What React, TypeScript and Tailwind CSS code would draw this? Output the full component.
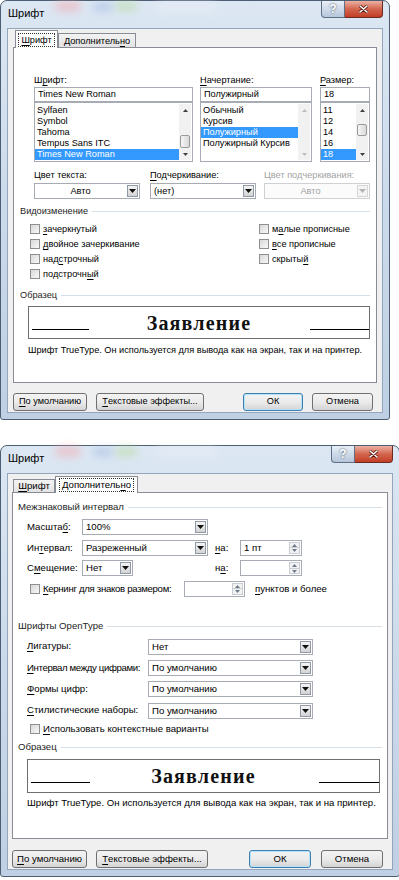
import React from "react";

const U = ({ children }: { children: React.ReactNode }) => (
  <span className="underline decoration-1 underline-offset-[1.5px]">{children}</span>
);

function TitleBar() {
  return (
    <div className="relative flex h-[27px] items-start">
      <span className="pointer-events-none absolute left-[48px] top-[1px] h-[9px] w-[26px] rounded-full bg-[#f3a7ad] opacity-60 blur-[4px]" />
      <span className="pointer-events-none absolute left-[86px] top-[2px] h-[8px] w-[20px] rounded-full bg-[#9fb7e0] opacity-60 blur-[4px]" />
      <span className="pointer-events-none absolute left-[108px] top-[1px] h-[9px] w-[22px] rounded-full bg-[#b9dca0] opacity-60 blur-[4px]" />
      <span className="pointer-events-none absolute left-[150px] top-[2px] h-[8px] w-[60px] rounded-full bg-[#e9eff7] opacity-70 blur-[4px]" />
      <span className="relative ml-[1px] mt-[6px] text-[11px] leading-[13px] text-black">Шрифт</span>
      <div className="relative ml-auto flex">
        <div className="flex h-[17px] w-[24px] items-center justify-center rounded-bl-[4px] border border-t-0 border-[#5f6f84] bg-gradient-to-b from-[#e8eff7] to-[#b6c6da] text-[12px] font-bold leading-none text-white [text-shadow:0_0_2px_#2b3a4d]">
          ?
        </div>
        <div className="flex h-[17px] w-[38px] items-center justify-center rounded-br-[4px] border border-l-0 border-t-0 border-[#6b2a20] bg-gradient-to-b from-[#eab0a3] via-[#d3654e] to-[#c23d24]">
          <svg width="9" height="8" viewBox="0 0 9 8">
            <path d="M1 1l7 6M8 1L1 7" stroke="#5a1a10" strokeWidth="3" strokeLinecap="round" />
            <path d="M1 1l7 6M8 1L1 7" stroke="#ffffff" strokeWidth="1.6" strokeLinecap="round" />
          </svg>
        </div>
      </div>
    </div>
  );
}

function Frame({ children, className }: { children: React.ReactNode; className: string }) {
  return (
    <div
      className={`relative rounded-t-[7px] rounded-b-[3px] border border-[#4e5e72] bg-gradient-to-b from-[#dce7f3] via-[#cbdaeb] to-[#bfd0e4] px-[6px] pb-[6px] ${className}`}
    >
      <TitleBar />
      <div className="border border-[#94a6bb] bg-[#f0f0f0]">{children}</div>
    </div>
  );
}

function Arrow({ dim }: { dim?: boolean }) {
  return (
    <div
      className={`m-px flex w-[11px] items-center justify-center border ${
        dim ? "border-[#d6d6d6] bg-[#f4f4f4]" : "border-[#8f9aa6] bg-gradient-to-b from-[#f5f5f5] to-[#d3d3d3]"
      }`}
    >
      <svg width="7" height="4" viewBox="0 0 7 4">
        <path d="M0 0h7L3.5 4z" fill={dim ? "#b5b5b5" : "#111111"} />
      </svg>
    </div>
  );
}

function Select({
  value,
  className,
  center,
  dim,
}: {
  value: string;
  className: string;
  center?: boolean;
  dim?: boolean;
}) {
  return (
    <div
      className={`flex h-[16px] border ${dim ? "border-[#cfd1d5] bg-[#fbfbfb]" : "border-[#a7abb3] bg-white"} ${className}`}
    >
      <span
        className={`flex-1 truncate px-[3px] leading-[14px] ${center ? "text-center" : ""} ${
          dim ? "text-[#a3a3a3]" : "text-black"
        }`}
      >
        {value}
      </span>
      <Arrow dim={dim} />
    </div>
  );
}

function Spin({ value, className }: { value?: string; className: string }) {
  return (
    <div className={`flex h-[16px] border border-[#a7abb3] bg-white ${className}`}>
      <span className="flex-1 px-[3px] leading-[14px]">{value}</span>
      <div className="my-px mr-px flex w-[11px] flex-col border border-[#c9ced5] bg-[#f2f2f2]">
        <div className="flex flex-1 items-center justify-center border-b border-[#c9ced5]">
          <svg width="5" height="3" viewBox="0 0 5 3">
            <path d="M2.5 0L5 3H0z" fill="#6d7b8c" />
          </svg>
        </div>
        <div className="flex flex-1 items-center justify-center">
          <svg width="5" height="3" viewBox="0 0 5 3">
            <path d="M0 0h5L2.5 3z" fill="#6d7b8c" />
          </svg>
        </div>
      </div>
    </div>
  );
}

function Box() {
  return (
    <span className="h-[10px] w-[10px] shrink-0 border border-[#8e8f8f] bg-gradient-to-br from-[#d9d9d9] to-[#f8f8f8]" />
  );
}

function Check({ children, className }: { children: React.ReactNode; className?: string }) {
  return (
    <div className={`flex items-center ${className ?? "h-[15px]"}`}>
      <Box />
      <span className="ml-[3px] whitespace-nowrap leading-[12px]">{children}</span>
    </div>
  );
}

function Group({ title, className }: { title: React.ReactNode; className: string }) {
  return (
    <div className={`flex h-[12px] items-center ${className}`}>
      <span className="leading-[12px] text-[#1e1e1e]">{title}</span>
      <span className="ml-[4px] h-px flex-1 bg-[#d5dfe5]" />
    </div>
  );
}

function ScrollBar({ thumb, dim }: { thumb?: string; dim?: boolean }) {
  const c = dim ? "#bdbdbd" : "#3f3f3f";
  return (
    <div className="flex w-[12px] flex-col bg-[#f1f1f1]">
      <div className="flex h-[12px] items-center justify-center">
        <svg width="5" height="3" viewBox="0 0 5 3">
          <path d="M2.5 0L5 3H0z" fill={c} />
        </svg>
      </div>
      <div className="flex-1">
        {thumb && (
          <div
            className={`mx-[1px] rounded-[2px] border border-[#9b9b9b] bg-gradient-to-r from-[#f6f6f6] to-[#d9d9d9] ${thumb}`}
          />
        )}
      </div>
      <div className="flex h-[12px] items-center justify-center">
        <svg width="5" height="3" viewBox="0 0 5 3">
          <path d="M0 0h5L2.5 3z" fill={c} />
        </svg>
      </div>
    </div>
  );
}

function ListBox({
  items,
  sel,
  thumb,
  dim,
}: {
  items: string[];
  sel: number;
  thumb?: string;
  dim?: boolean;
}) {
  return (
    <div className="flex h-[60px] border border-[#a7abb3] bg-white">
      <div className="flex-1 pt-[2px]">
        {items.map((it, i) => (
          <div
            key={it}
            className={`h-[11px] whitespace-nowrap px-[2px] leading-[11px] ${
              i === sel ? "bg-[#3399ff] text-white" : "text-black"
            }`}
          >
            {it}
          </div>
        ))}
      </div>
      <div className="flex py-px pr-px">
        <ScrollBar thumb={thumb} dim={dim} />
      </div>
    </div>
  );
}

function Input({ value }: { value: string }) {
  return <div className="h-[15px] border border-[#a7abb3] bg-white px-[3px] leading-[13px]">{value}</div>;
}

function Btn({ children, className, def }: { children: React.ReactNode; className: string; def?: boolean }) {
  return (
    <button
      type="button"
      className={`flex h-[18px] items-center justify-center whitespace-nowrap rounded-[3px] border bg-gradient-to-b from-[#f3f3f3] via-[#ebebeb] to-[#d4d4d4] leading-none text-black ${
        def ? "border-[#3c7fb1] shadow-[inset_0_0_0_1px_#b6e3fb]" : "border-[#707070]"
      } ${className}`}
    >
      {children}
    </button>
  );
}

function Preview({ className, left, right }: { className: string; left: string; right: string }) {
  return (
    <div className={`grid grid-cols-[1fr_auto_1fr] border border-[#6f6f6f] bg-white ${className}`}>
      <span className={`ml-[3px] mt-[13px] h-px self-center justify-self-start bg-black ${left}`} />
      <span className="self-center font-['Liberation_Serif',serif] text-[20px] font-bold leading-none tracking-[1.2px] text-[#111]">
        Заявление
      </span>
      <span className={`mt-[13px] h-px self-center justify-self-end bg-black ${right}`} />
    </div>
  );
}

function Tab({ children, active, className }: { children: React.ReactNode; active?: boolean; className: string }) {
  return (
    <div
      className={`flex items-center justify-center border border-b-0 border-[#898c95] ${
        active ? "relative z-10 -mb-px bg-white" : "bg-gradient-to-b from-[#f3f3f3] to-[#e3e3e3]"
      } ${className}`}
    >
      <span className={`whitespace-nowrap px-[2px] leading-[12px] ${active ? "outline-1 outline-dotted outline-[#333]" : ""}`}>
        {children}
      </span>
    </div>
  );
}

function DialogFont() {
  return (
    <Frame className="w-[390px] text-[9.2px]">
      <div className="px-[5px] pt-px">
        <div className="flex items-end pl-[2px]">
          <Tab active className="h-[18px] w-[43px]">
            <U>Ш</U>рифт
          </Tab>
          <Tab className="h-[14px] w-[78px]">
            Дополнитель<U>н</U>о
          </Tab>
        </div>
        <div className="h-[336px] border border-[#898c95] bg-white">
          <div className="flex pl-[20px] pt-[26px]">
            <div className="w-[159px]">
              <div className="h-[13px] leading-[13px]">
                Ш<U>р</U>ифт:
              </div>
              <Input value="Times New Roman" />
              <ListBox
                items={["Sylfaen", "Symbol", "Tahoma", "Tempus Sans ITC", "Times New Roman"]}
                sel={4}
                thumb="mt-[19px] h-[13px]"
              />
            </div>
            <div className="ml-[7px] w-[112px]">
              <div className="h-[13px] leading-[13px]">
                <U>Н</U>ачертание:
              </div>
              <Input value="Полужирный" />
              <ListBox items={["Обычный", "Курсив", "Полужирный", "Полужирный Курсив"]} sel={2} dim />
            </div>
            <div className="ml-[8px] w-[50px]">
              <div className="h-[13px] leading-[13px]">
                <U>Р</U>азмер:
              </div>
              <Input value="18" />
              <ListBox items={["11", "12", "14", "16", "18"]} sel={4} thumb="mt-[8px] h-[12px]" />
            </div>
          </div>

          <div className="mt-[7px] flex pl-[20px]">
            <div className="w-[106px]">
              <div className="h-[14px] leading-[13px]">Цвет текста:</div>
              <Select value="Авто" center className="w-full" />
            </div>
            <div className="ml-[10px] w-[106px]">
              <div className="h-[14px] leading-[13px]">
                <U>П</U>одчеркивание:
              </div>
              <Select value="(нет)" className="w-full" />
            </div>
            <div className="ml-[8px] w-[106px]">
              <div className="h-[14px] whitespace-nowrap leading-[13px] text-[#a3a3a3]">Цвет подчеркивания:</div>
              <Select value="Авто" center dim className="w-full" />
            </div>
          </div>

          <Group title="Видоизменение" className="mt-[6px] px-[6px]" />
          <div className="mt-[4px] flex pl-[16px]">
            <div className="w-[229px]">
              <Check>
                <U>з</U>ачеркнутый
              </Check>
              <Check>
                <U>д</U>войное зачеркивание
              </Check>
              <Check>
                над<U>с</U>трочный
              </Check>
              <Check>
                подстрочн<U>ы</U>й
              </Check>
            </div>
            <div>
              <Check>
                м<U>а</U>лые прописные
              </Check>
              <Check>
                <U>в</U>се прописные
              </Check>
              <Check>
                скрыты<U>й</U>
              </Check>
            </div>
          </div>

          <Group title="Образец" className="mt-[8px] px-[6px]" />
          <Preview className="ml-[14px] mt-[5px] h-[33px] w-[342px]" left="w-[57px]" right="w-[59px]" />
          <div className="ml-[14px] mt-[5px] h-[12px] whitespace-nowrap leading-[12px]">
            Шрифт TrueType. Он используется для вывода как на экран, так и на принтер.
          </div>
        </div>

        <div className="mt-[10px] flex pb-px">
          <Btn className="w-[74px]">
            <U>П</U>о умолчанию
          </Btn>
          <Btn className="ml-[9px] w-[108px]">
            <U>Т</U>екстовые эффекты...
          </Btn>
          <Btn def className="ml-auto w-[60px]">
            ОК
          </Btn>
          <Btn className="ml-[9px] mr-[4px] w-[61px]">Отмена</Btn>
        </div>
      </div>
    </Frame>
  );
}

function Row({ children, className }: { children: React.ReactNode; className: string }) {
  return <div className={`flex items-center whitespace-nowrap pl-[14px] ${className}`}>{children}</div>;
}

function DialogExtra() {
  return (
    <Frame className="w-[400px] text-[9.6px]">
      <div className="px-[4px] pt-[2px]">
        <div className="flex items-end pl-px">
          <Tab className="h-[13px] w-[42px]">
            <U>Ш</U>рифт
          </Tab>
          <Tab active className="h-[17px] w-[83px]">
            Дополнитель<U>н</U>о
          </Tab>
        </div>
        <div className="h-[347px] border border-[#898c95] bg-white">
          <Group title="Межзнаковый интервал" className="mt-[8px] px-[5px]" />
          <div className="mt-[4px]">
            <Row className="h-[20.5px]">
              <span className="w-[55px]">
                Масшта<U>б</U>:
              </span>
              <Select value="100%" className="w-[126px]" />
            </Row>
            <Row className="h-[20.5px]">
              <span className="w-[55px]">
                Ин<U>т</U>ервал:
              </span>
              <Select value="Разреженный" className="w-[126px]" />
              <span className="ml-[7px] w-[25px]">
                <U>н</U>а:
              </span>
              <Spin value="1 пт" className="w-[62px]" />
            </Row>
            <Row className="h-[20.5px]">
              <span className="w-[55px]">
                С<U>м</U>ещение:
              </span>
              <div className="w-[126px]">
                <Select value="Нет" className="w-[51px]" />
              </div>
              <span className="ml-[7px] w-[25px]">
                н<U>а</U>:
              </span>
              <Spin className="w-[62px]" />
            </Row>
            <Row className="h-[20.5px] pl-[17px]">
              <div className="w-[154px] tracking-[-0.3px]">
                <Check className="h-[16px]">
                  <U>К</U>ернинг для знаков размером:
                </Check>
              </div>
              <Spin className="w-[61px]" />
              <span className="ml-[10px]">
                <U>п</U>унктов и более
              </span>
            </Row>
          </div>

          <Group title="Шрифты OpenType" className="mt-[21px] px-[5px]" />
          <div className="mt-[4px]">
            <Row className="h-[21.3px]">
              <span className="w-[121px]">
                <U>Л</U>игатуры:
              </span>
              <Select value="Нет" className="w-[165px]" />
            </Row>
            <Row className="h-[21.3px]">
              <span className="w-[121px] tracking-[-0.35px]">
                <U>И</U>нтервал между цифрами:
              </span>
              <Select value="По умолчанию" className="w-[165px]" />
            </Row>
            <Row className="h-[21.3px]">
              <span className="w-[121px]">
                <U>Ф</U>ормы цифр:
              </span>
              <Select value="По умолчанию" className="w-[165px]" />
            </Row>
            <Row className="h-[21.3px]">
              <span className="w-[121px]">
                <U>С</U>тилистические наборы:
              </span>
              <Select value="По умолчанию" className="w-[165px]" />
            </Row>
            <div className="pl-[17px]">
              <Check className="h-[16px]">
                <U>И</U>спользовать контекстные варианты
              </Check>
            </div>
          </div>

          <Group title="Образец" className="mt-[4px] px-[5px]" />
          <Preview className="ml-[14px] mt-[6px] h-[34px] w-[353px]" left="w-[59px]" right="w-[60px]" />
          <div className="ml-[14px] mt-[4px] h-[12px] whitespace-nowrap leading-[12px]">
            Шрифт TrueType. Он используется для вывода как на экран, так и на принтер.
          </div>
        </div>

        <div className="mt-[11px] flex pb-px">
          <Btn className="w-[75px]">
            <U>П</U>о умолчанию
          </Btn>
          <Btn className="ml-[9px] w-[112px]">
            <U>Т</U>екстовые эффекты...
          </Btn>
          <Btn def className="ml-auto w-[62px]">
            ОК
          </Btn>
          <Btn className="ml-[10px] mr-[5px] w-[62px]">Отмена</Btn>
        </div>
      </div>
    </Frame>
  );
}

export default function App() {
  return (
    <div className="h-[880px] w-[399px] overflow-hidden bg-white font-['Liberation_Sans',Arial,sans-serif] text-black">
      <DialogFont />
      <div className="h-[25px]" />
      <DialogExtra />
    </div>
  );
}
